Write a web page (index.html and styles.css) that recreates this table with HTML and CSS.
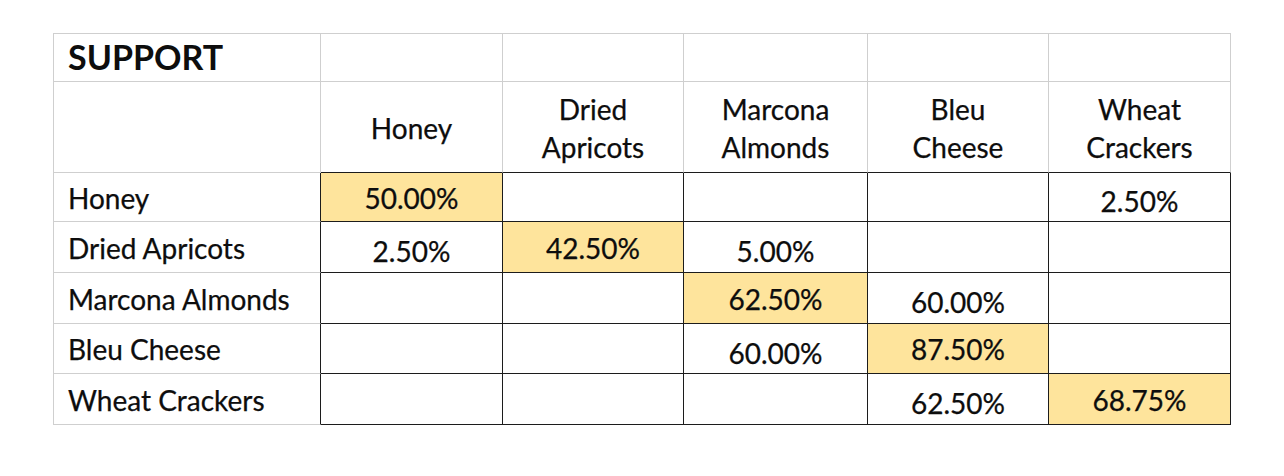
FILE: index.html
```html
<!DOCTYPE html>
<html lang="en">
<head>
<meta charset="utf-8">
<title>Support</title>
<link rel="stylesheet" href="styles.css">
</head>
<body>
<div class="sheet">
  <div class="grid">
    <div class="cell label title">SUPPORT</div>
    <div class="cell head"></div>
    <div class="cell head"></div>
    <div class="cell head"></div>
    <div class="cell head"></div>
    <div class="cell head"></div>

    <div class="cell label"></div>
    <div class="cell head colhead">Honey</div>
    <div class="cell head colhead">Dried<br>Apricots</div>
    <div class="cell head colhead">Marcona<br>Almonds</div>
    <div class="cell head colhead">Bleu<br>Cheese</div>
    <div class="cell head colhead">Wheat<br>Crackers</div>

    <div class="cell label rowhead">Honey</div>
    <div class="cell data hl">50.00%</div>
    <div class="cell data"></div>
    <div class="cell data"></div>
    <div class="cell data"></div>
    <div class="cell data">2.50%</div>

    <div class="cell label rowhead">Dried Apricots</div>
    <div class="cell data">2.50%</div>
    <div class="cell data hl">42.50%</div>
    <div class="cell data">5.00%</div>
    <div class="cell data"></div>
    <div class="cell data"></div>

    <div class="cell label rowhead">Marcona Almonds</div>
    <div class="cell data"></div>
    <div class="cell data"></div>
    <div class="cell data hl">62.50%</div>
    <div class="cell data">60.00%</div>
    <div class="cell data"></div>

    <div class="cell label rowhead">Bleu Cheese</div>
    <div class="cell data"></div>
    <div class="cell data"></div>
    <div class="cell data">60.00%</div>
    <div class="cell data hl">87.50%</div>
    <div class="cell data"></div>

    <div class="cell label rowhead">Wheat Crackers</div>
    <div class="cell data"></div>
    <div class="cell data"></div>
    <div class="cell data"></div>
    <div class="cell data">62.50%</div>
    <div class="cell data hl">68.75%</div>
  </div>
</div>
</body>
</html>
```

FILE: styles.css
```css
html, body {
  margin: 0;
  padding: 0;
  background: #ffffff;
}

body {
  font-family: Lato, "Open Sans", "Liberation Sans", sans-serif;
  color: #0d0d0d;
}

.sheet {
  padding: 33px 0 0 53px;
}

.grid {
  display: grid;
  grid-template-columns: 267px 182px 181px 184px 181px 182px;
  grid-template-rows: 48px 91px 49px 51px 51px 50px 51px;
  width: max-content;
  border-top: 1px solid #cfcfcf;
  border-left: 1px solid #cfcfcf;
}

.cell {
  box-sizing: border-box;
  display: flex;
  align-items: center;
  font-size: 28px;
  line-height: 38px;
  -webkit-text-stroke: 0.25px #0d0d0d;
}

.label {
  border-right: 1px solid #cfcfcf;
  border-bottom: 1px solid #cfcfcf;
  padding-left: 14px;
  justify-content: flex-start;
}

.title {
  font-weight: 700;
  font-size: 34px;
  padding-bottom: 2px;
  -webkit-text-stroke: 0;
}

.rowhead {
  border-right-color: #1c1c1c;
  padding-top: 1px;
}

.head {
  border-right: 1px solid #cfcfcf;
  border-bottom: 1px solid #cfcfcf;
  justify-content: center;
  text-align: center;
}

.colhead {
  border-bottom-color: #1c1c1c;
  padding-top: 2px;
}

.data {
  border-right: 1px solid #1c1c1c;
  border-bottom: 1px solid #1c1c1c;
  justify-content: center;
  padding-top: 8px;
}

.hl {
  background: #fee49c;
  padding-top: 1px;
}
```
